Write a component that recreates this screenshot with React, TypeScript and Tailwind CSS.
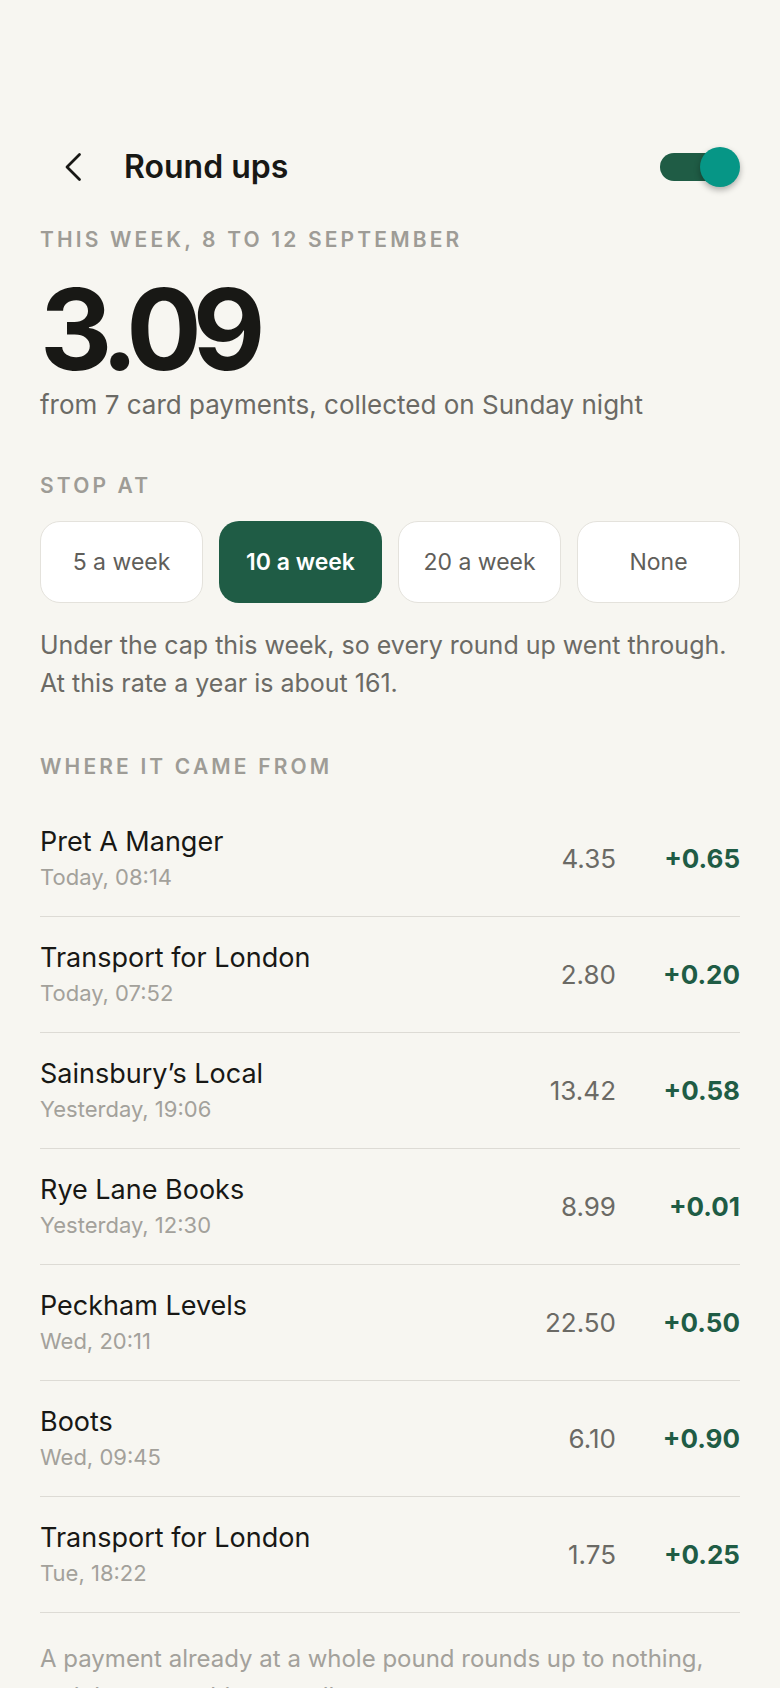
import { useState } from "react";

type Payment = { name: string; time: string; amount: string; roundUp: string };

const payments: Payment[] = [
  { name: "Pret A Manger", time: "Today, 08:14", amount: "4.35", roundUp: "+0.65" },
  { name: "Transport for London", time: "Today, 07:52", amount: "2.80", roundUp: "+0.20" },
  { name: "Sainsbury\u2019s Local", time: "Yesterday, 19:06", amount: "13.42", roundUp: "+0.58" },
  { name: "Rye Lane Books", time: "Yesterday, 12:30", amount: "8.99", roundUp: "+0.01" },
  { name: "Peckham Levels", time: "Wed, 20:11", amount: "22.50", roundUp: "+0.50" },
  { name: "Boots", time: "Wed, 09:45", amount: "6.10", roundUp: "+0.90" },
  { name: "Transport for London", time: "Tue, 18:22", amount: "1.75", roundUp: "+0.25" },
];

const caps = ["5 a week", "10 a week", "20 a week", "None"];

function SectionLabel({ children }: { children: React.ReactNode }) {
  return (
    <h2 className="text-[21px] leading-6 font-semibold uppercase tracking-[0.15em] text-[#9e9c96]">
      {children}
    </h2>
  );
}

export default function App() {
  const [enabled, setEnabled] = useState(true);
  const [cap, setCap] = useState("10 a week");

  return (
    <div className="min-h-screen bg-[#f7f6f1] px-10 pt-[139px] font-['Inter',sans-serif] text-[#181815]">
      <header className="flex h-14 items-center">
        <button className="ml-[16px] flex h-12 w-[34px] items-center justify-center text-[#181815]">
          <svg width="20" height="30" viewBox="0 0 20 30" fill="none" stroke="currentColor" strokeWidth="2.8" strokeLinecap="round" strokeLinejoin="round">
            <path d="M16.5 2.5 4 15l12.5 12.5" />
          </svg>
        </button>
        <h1 className="ml-[34px] text-[32px] font-semibold">Round ups</h1>
        <button
          onClick={() => setEnabled(!enabled)}
          className="relative ml-auto h-10 w-20"
          aria-label="Toggle round ups"
        >
          <span className={`absolute left-0 top-[6px] h-7 w-[74px] rounded-full ${enabled ? "bg-[#1f5c45]" : "bg-[#c9c7c0]"}`} />
          <span
            className={`absolute top-0 h-10 w-10 rounded-full shadow-[0_3px_6px_rgba(0,0,0,0.3)] ${enabled ? "right-0 bg-[#069686]" : "left-0 bg-white"}`}
          />
        </button>
      </header>

      <section className="mt-[33px]">
        <SectionLabel>This week, 8 to 12 September</SectionLabel>
        <p className="mt-[21px] text-[112px] leading-none font-bold tracking-[-0.08em]">3.09</p>
        <p className="mt-1 text-[26px] leading-8 text-[#6b6a65]">
          from 7 card payments, collected on Sunday night
        </p>
      </section>

      <section className="mt-[53px]">
        <SectionLabel>Stop at</SectionLabel>
        <div className="mt-[23px] grid grid-cols-4 gap-4">
          {caps.map((c) => (
            <button
              key={c}
              onClick={() => setCap(c)}
              className={
                c === cap
                  ? "h-[82px] rounded-[20px] bg-[#1f5c45] text-[23px] font-semibold text-white"
                  : "h-[82px] rounded-[20px] border border-[#e4e2dc] bg-white text-[23px] text-[#5f5e5a]"
              }
            >
              {c}
            </button>
          ))}
        </div>
        <p className="mt-[23px] text-[25px] leading-[38px] text-[#6b6a65]">
          Under the cap this week, so every round up went through.
          <br />
          At this rate a year is about 161.
        </p>
      </section>

      <section className="mt-[53px]">
        <SectionLabel>Where it came from</SectionLabel>
        <ul className="mt-[22px]">
          {payments.map((p, i) => (
            <li key={i} className="flex items-center border-b border-[#dddbd5] py-[25px]">
              <div className="flex-1">
                <div className="text-[27px] leading-8">{p.name}</div>
                <div className="mt-[5px] text-[22px] leading-7 text-[#a3a19b]">{p.time}</div>
              </div>
              <div className="text-right text-[26px] text-[#6b6a65]">{p.amount}</div>
              <div className="w-[124px] text-right text-[26px] font-bold text-[#1f5c45]">{p.roundUp}</div>
            </li>
          ))}
        </ul>
        <p className="mt-[27px] pb-10 text-[24px] leading-[38px] text-[#a3a19b]">
          A payment already at a whole pound rounds up to nothing,
          <br />
          so it leaves nothing to collect.
        </p>
      </section>
    </div>
  );
}
